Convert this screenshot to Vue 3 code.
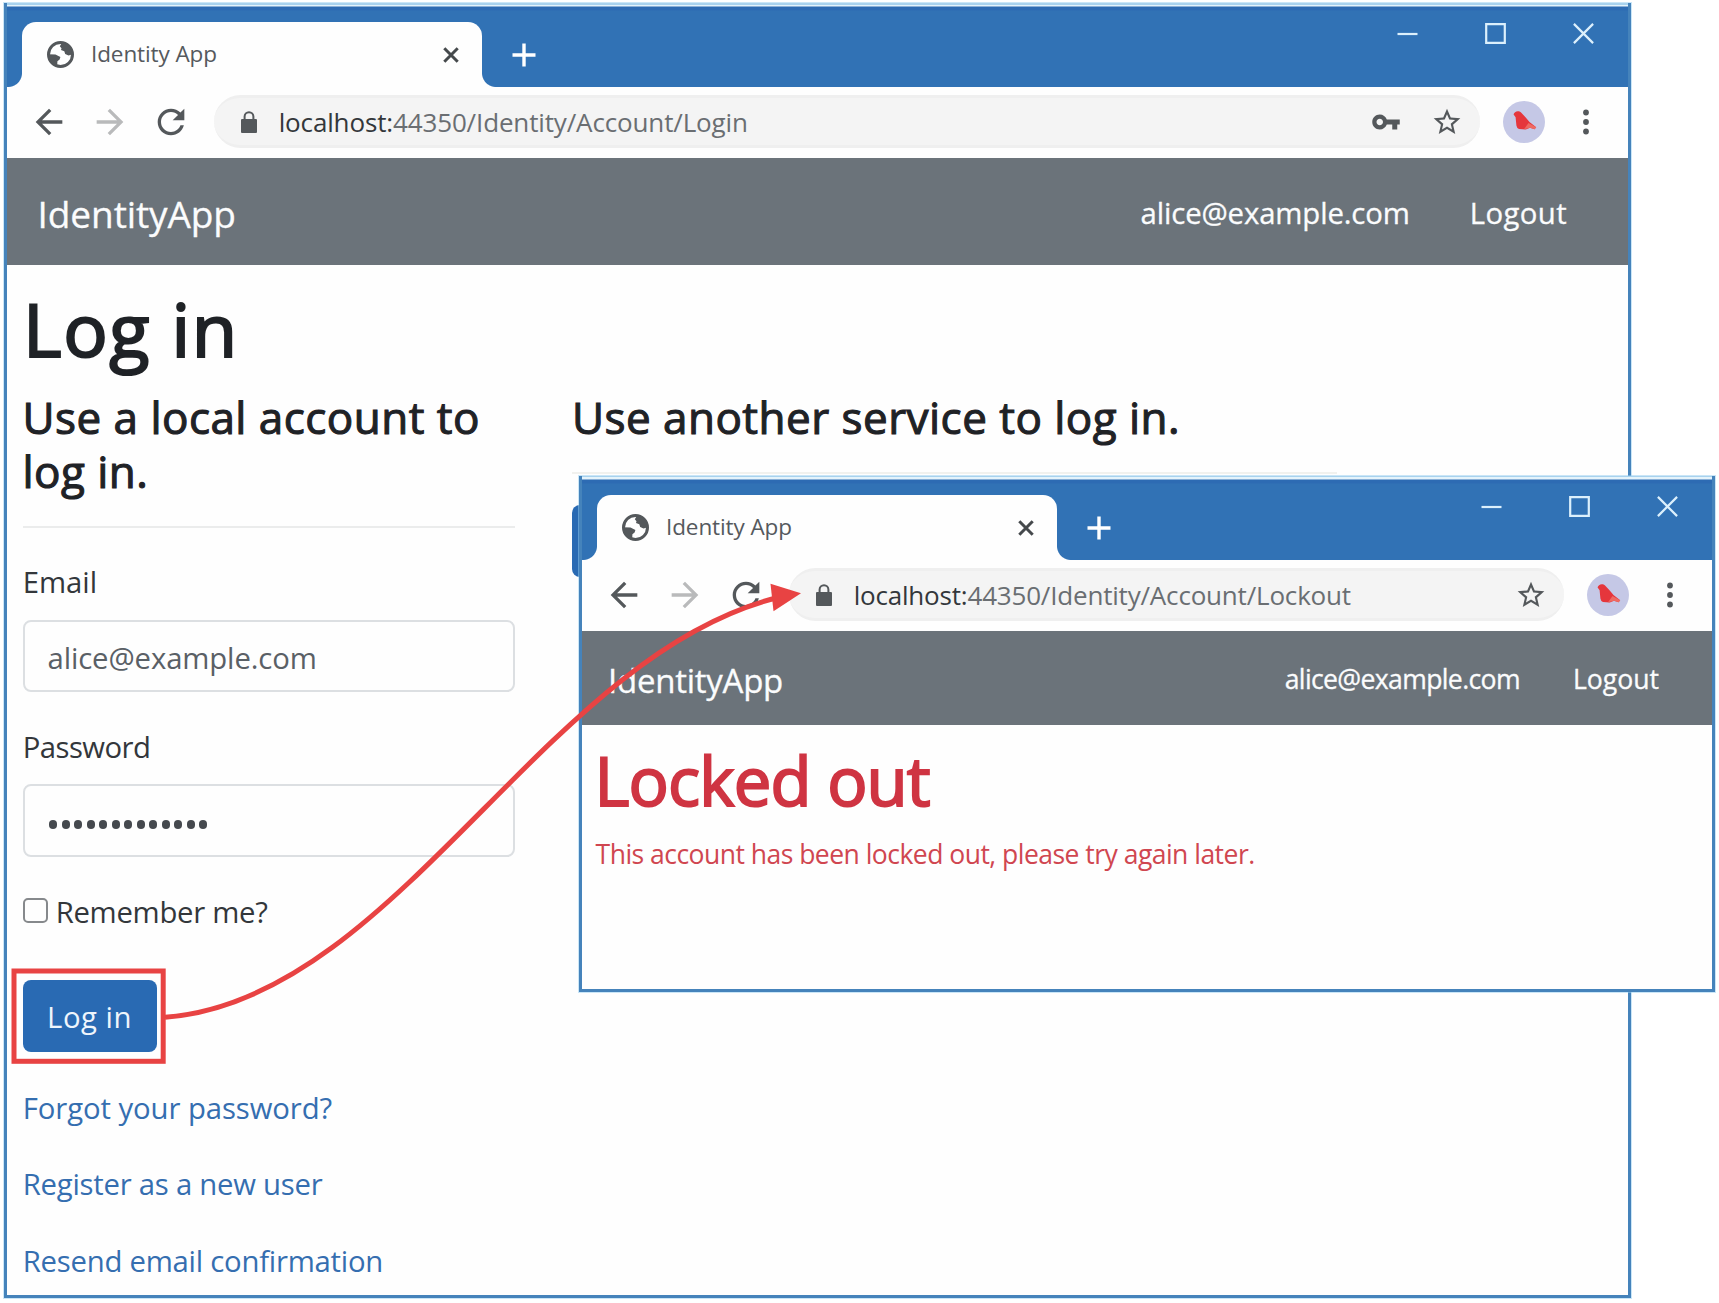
<script setup>
const windows = [
  { id: 'login', path: 'Login', showKey: true },
  { id: 'lockout', path: 'Lockout', showKey: false },
]
const links = ['Forgot your password?', 'Register as a new user', 'Resend email confirmation']
const passwordLength = 13
</script>

<template>
  <main class="desktop">
    <section v-for="w in windows" :key="w.id" class="window" :class="w.id">
      <header class="strip">
        <div class="tab">
          <svg class="globe" viewBox="0 0 27 27">
            <circle cx="13.5" cy="13.5" r="12" fill="#fff" stroke="#54585b" stroke-width="3" />
            <path d="M14.5 2.5 12.8 5.2 14.5 7.2 14 9 17.3 10.2 18.2 13 21.5 14.6 25 13.5C25 8 21 2 14.5 2.5Z" fill="#54585b" />
            <path d="M1.5 13.2 8.5 13.4 13.4 16.1 12.6 18.6 10.4 20.3 10.2 24.8C5 24 1.5 19 1.5 13.2Z" fill="#54585b" />
          </svg>
          <span class="tab-title">Identity App</span>
          <svg class="tab-close" viewBox="0 0 16 16"><path d="M1.3 1.3 14.7 14.7M14.7 1.3 1.3 14.7" /></svg>
        </div>
        <svg class="plus" viewBox="0 0 24 24"><path d="M12 .5V23.5M.5 12H23.5" /></svg>
        <div class="controls">
          <svg viewBox="0 0 21 21"><path d="M.5 11H20.5" /></svg>
          <svg viewBox="0 0 21 21"><path d="M1.2 1.2H19.8V19.8H1.2Z" /></svg>
          <svg viewBox="0 0 21 21"><path d="M.9 .9 20.1 20.1M20.1 .9 .9 20.1" /></svg>
        </div>
      </header>

      <nav class="toolbar">
        <span class="tool">
          <svg viewBox="0 0 24 24"><path d="M20 11H7.83l5.59-5.59L12 4l-8 8 8 8 1.41-1.41L7.83 13H20v-2z" /></svg>
        </span>
        <span class="tool off">
          <svg viewBox="0 0 24 24"><path d="M12 4l-1.41 1.41L16.17 11H4v2h12.17l-5.58 5.59L12 20l8-8z" /></svg>
        </span>
        <span class="tool">
          <svg viewBox="0 0 24 24"><path d="M17.65 6.35C16.2 4.9 14.21 4 12 4c-4.42 0-7.99 3.58-7.99 8s3.57 8 7.99 8c3.73 0 6.84-2.55 7.73-6h-2.08c-.82 2.33-3.04 4-5.65 4-3.31 0-6-2.69-6-6s2.69-6 6-6c1.66 0 3.14.69 4.22 1.78L13 11h7V4l-2.35 2.35z" /></svg>
        </span>
        <div class="address">
          <svg class="lock" viewBox="0 0 16 22">
            <rect x="0" y="8" width="16" height="14" rx="1" fill="#54585b" />
            <path d="M3.6 9V5.6a4.4 4.4 0 0 1 8.8 0V9" fill="none" stroke="#54585b" stroke-width="2" />
          </svg>
          <span class="url"><b>localhost:</b>44350/Identity/Account/{{ w.path }}</span>
          <svg v-if="w.showKey" class="key" viewBox="0 0 24 24"><path d="M12.65 10C11.83 7.67 9.61 6 7 6c-3.31 0-6 2.69-6 6s2.69 6 6 6c2.61 0 4.83-1.67 5.65-4H17v4h4v-4h2v-4H12.65zM7 14.6c-1.45 0-2.6-1.15-2.6-2.6S5.55 9.4 7 9.4s2.6 1.15 2.6 2.6-1.15 2.6-2.6 2.6z" /></svg>
          <svg class="star" viewBox="0 0 24 24"><path d="M22 9.24l-7.19-.62L12 2 9.19 8.63 2 9.24l5.46 4.73L5.82 21 12 17.27 18.18 21l-1.63-7.03L22 9.24zM12 15.4l-3.76 2.27 1-4.28-3.32-2.88 4.38-.38L12 6.1l1.71 4.04 4.38.38-3.32 2.88 1 4.28L12 15.4z" /></svg>
        </div>
        <svg class="avatar" viewBox="0 0 42 42">
          <circle cx="21" cy="21" r="21" fill="#c5c8e6" />
          <path d="M10.6 13.5C11.2 10.4 15.5 9 18.3 11.8L22.5 16.2 26.5 21 33.2 26.2 31.6 28.2 27 26.8 22.8 28.4 16 28Q13.6 26.6 13.4 24.4L12.6 16.2Z" fill="#e5363c" />
          <path d="M25.5 22 33.2 26.2 31.6 28.2 27 26.8 21 28.2Z" fill="#ee6a62" />
        </svg>
        <svg class="dots" viewBox="0 0 6 26">
          <circle cx="3" cy="3.5" r="2.9" /><circle cx="3" cy="13" r="2.9" /><circle cx="3" cy="22.5" r="2.9" />
        </svg>
      </nav>

      <div class="navbar">
        <span class="brand">IdentityApp</span>
        <span class="user">alice@example.com</span>
        <span class="logout">Logout</span>
      </div>

      <div v-if="w.id === 'login'" class="page">
        <h1>Log in</h1>
        <div class="columns">
          <form class="local" @submit.prevent>
            <h4>Use a local account to<br />log in.</h4>
            <hr />
            <label class="email-label">Email</label>
            <div class="field">alice@example.com</div>
            <label class="password-label">Password</label>
            <div class="field password"><i v-for="n in passwordLength" :key="n"></i></div>
            <label class="remember"><span class="checkbox"></span>Remember me?</label>
            <button type="submit">Log in</button>
            <a v-for="link in links" :key="link" :class="link.split(' ')[0].toLowerCase()">{{ link }}</a>
          </form>
          <div class="external">
            <h4>Use another service to log in.</h4>
            <hr />
            <div class="provider"></div>
          </div>
        </div>
      </div>

      <div v-else class="page">
        <h1>Locked out</h1>
        <p>This account has been locked out, please try again later.</p>
      </div>
    </section>

    <svg class="callout" viewBox="0 0 1719 1303">
      <rect x="14" y="971" width="149.2" height="90.3" fill="none" stroke="#e84343" stroke-width="5" />
      <path d="M165 1017.3C396 1000 544 655 778 597.5" fill="none" stroke="#e84343" stroke-width="5" />
      <path d="M770.5 583.7 801 593.3 773.5 611.3Z" fill="#e84343" />
    </svg>
  </main>
</template>

<style>
body { margin: 0; background: #fff; }
</style>

<style scoped>
* { box-sizing: border-box; }
.desktop {
  position: relative;
  width: 1719px;
  height: 1303px;
  overflow: hidden;
  background: #fff;
  font-family: "Open Sans", "Noto Sans", sans-serif;
  color: #33373b;
}
svg { display: block; flex: none; }

.window {
  position: absolute;
  background: #fefefe;
  border: 3px solid #4583bb;
  border-top: 0;
  box-shadow: 0 0 0 1px rgba(150, 205, 240, 0.5);
}
.window.login { left: 4px; top: 3px; width: 1627px; height: 1295px; }
.window.lockout { left: 579px; top: 476px; width: 1136px; height: 516px; }

.strip {
  display: flex;
  height: 84px;
  padding: 19px 0 0 15px;
  background: linear-gradient(#a8d2ee 0 1.5px, #e4f3fb 1.5px 3px, #2d6bb3 4px 7px, #3172b5 8px);
}
.tab {
  position: relative;
  display: flex;
  align-items: center;
  width: 460px;
  height: 65px;
  padding: 0 23px 0 25px;
  background: #fefefe;
  border-radius: 14px 14px 0 0;
}
.tab::before,
.tab::after {
  content: "";
  position: absolute;
  bottom: 0;
  width: 14px;
  height: 14px;
}
.tab::before { left: -14px; background: radial-gradient(circle at 0 0, transparent 13.5px, #fefefe 14.5px); }
.tab::after { right: -14px; background: radial-gradient(circle at 100% 0, transparent 13.5px, #fefefe 14.5px); }
.globe { width: 27px; height: 27px; }
.tab-title {
  margin: 0 0 1px 17px;
  font-size: 22.5px;
  line-height: 32px;
  letter-spacing: -0.1px;
  color: #55595d;
}
.tab-close { width: 16px; height: 16px; margin-left: auto; }
.tab-close path { stroke: #45494c; stroke-width: 3; }
.plus { width: 24px; height: 24px; margin: 20.5px 0 0 30px; }
.plus path { stroke: #fff; stroke-width: 3.4; }
.controls { display: flex; gap: 67px; margin: 1.4px 34px 0 auto; }
.controls svg { width: 21px; height: 21px; }
.controls path { fill: none; stroke: #dcf0fc; stroke-width: 2.2; }

.toolbar {
  display: flex;
  align-items: center;
  height: 71px;
  padding: 0 39.2px 1.5px 11.4px;
  fill: #54585b;
}
.tool { display: flex; justify-content: center; width: 61.2px; }
.tool svg { width: 40px; height: 40px; }
.tool.off { fill: #b9babb; }
.address {
  flex: 1;
  display: flex;
  align-items: center;
  height: 53px;
  margin: 0 22.6px 0 12.5px;
  padding: 0 17px 0 26.2px;
  border-radius: 27px;
  background: #f4f4f4;
  border: solid #efefef;
  border-width: 3px 0;
}
.lock { width: 16px; height: 22px; }
.url {
  margin: 0 auto 0 22px;
  font-size: 26px;
  line-height: 40px;
  letter-spacing: -0.14px;
  color: #6a6e72;
  white-space: nowrap;
}
.lockout .url { letter-spacing: -0.19px; }
.url b { font-weight: 400; color: #33373b; }
.key { width: 30px; height: 30px; margin-right: 30px; }
.star { width: 32px; height: 32px; }
.avatar { width: 42px; height: 42px; }
.dots { width: 6px; height: 26px; margin-left: 38px; }

.navbar {
  display: flex;
  align-items: center;
  height: 107px;
  padding: 2px 61px 0 30.6px;
  background: #6b737a;
  color: #fbfcfd;
  font-size: 29.3px;
  line-height: 50px;
  -webkit-text-stroke: 0.3px #fbfcfd;
}
.brand { margin-right: auto; padding-top: 3px; font-size: 37px; letter-spacing: -0.1px; }
.user { letter-spacing: -0.12px; }
.logout { margin-left: 60px; letter-spacing: 0.4px; }
.lockout .navbar { height: 94px; padding: 2px 53px 0 26px; font-size: 26.6px; }
.lockout .brand { padding-top: 4px; font-size: 33px; letter-spacing: -0.25px; }
.lockout .user { letter-spacing: -0.65px; }
.lockout .logout { margin-left: 53px; letter-spacing: 0; }

.page { padding-left: 15.5px; }
h1, h4, p { margin: 0; font-weight: 400; }
h1 {
  margin: 19.6px 0 0 0.5px;
  font-size: 74px;
  line-height: 88px;
  letter-spacing: 1.5px;
  color: #1f2226;
  -webkit-text-stroke: 2.2px #1f2226;
}
.columns { display: flex; padding-top: 16.6px; }
.local { display: flex; flex-direction: column; align-items: flex-start; width: 492px; }
h4 {
  position: relative;
  top: 0.8px;
  margin-left: 0;
  font-size: 44px;
  line-height: 54px;
  letter-spacing: 0.47px;
  white-space: nowrap;
  color: #1f2226;
  -webkit-text-stroke: 1.1px #1f2226;
}
hr { width: 100%; height: 2px; margin: 28.5px 0 0; border: 0; background: #ebecec; }
label, .field, button, a { font-size: 29.3px; line-height: 44px; }
.email-label { margin: 32.5px 0 15.8px 0.2px; letter-spacing: 0; }
.field {
  display: flex;
  align-items: center;
  width: 492px;
  height: 72.3px;
  padding: 4.5px 0 0 23px;
  border: 2px solid #dcdfe2;
  border-radius: 8px;
  color: #5a6066;
  letter-spacing: -0.12px;
}
.password-label { margin: 33px 0 15.1px 0.2px; letter-spacing: -0.55px; }
.password { gap: 4.3px; padding: 8px 0 0 24.7px; }
.password i { width: 8.2px; height: 8.2px; border-radius: 50%; background: #45494e; }
.remember { display: flex; align-items: flex-start; margin-top: 33.2px; letter-spacing: -0.3px; }
.checkbox { width: 25px; height: 25px; margin: 7.8px 8.2px 0 0; border: 2px solid #86898c; border-radius: 5px; }
button {
  width: 134px;
  height: 72.5px;
  margin-top: 46.1px;
  padding: 1.5px 0 0;
  border: 0;
  border-radius: 8px;
  background: #296ab3;
  color: #eef5fc;
  font-family: inherit;
  letter-spacing: 0.5px;
}
a { margin: 32.5px 0 0 0.2px; letter-spacing: -0.24px; color: #356eb0; }
a.forgot { margin-top: 33.1px; letter-spacing: -0.08px; }
.external { width: 765px; margin-left: 57.5px; }
.external hr { margin-top: 29px; background: #f1f1ee; }
.provider { width: 160px; height: 72px; margin-top: 31px; border-radius: 8px; background: #296ab3; }

.lockout .page { padding-left: 13px; color: #cf3442; }
.lockout h1 {
  margin: 15.2px 0 0 -0.5px;
  font-size: 67px;
  line-height: 80px;
  letter-spacing: -0.85px;
  color: inherit;
  -webkit-text-stroke: 2px #cf3442;
}
.lockout p { margin: 13.8px 0 0 0.6px; font-size: 26.5px; line-height: 40px; letter-spacing: -0.52px; color: #d04650; }

.callout { position: absolute; left: 0; top: 0; width: 1719px; height: 1303px; pointer-events: none; }
</style>
